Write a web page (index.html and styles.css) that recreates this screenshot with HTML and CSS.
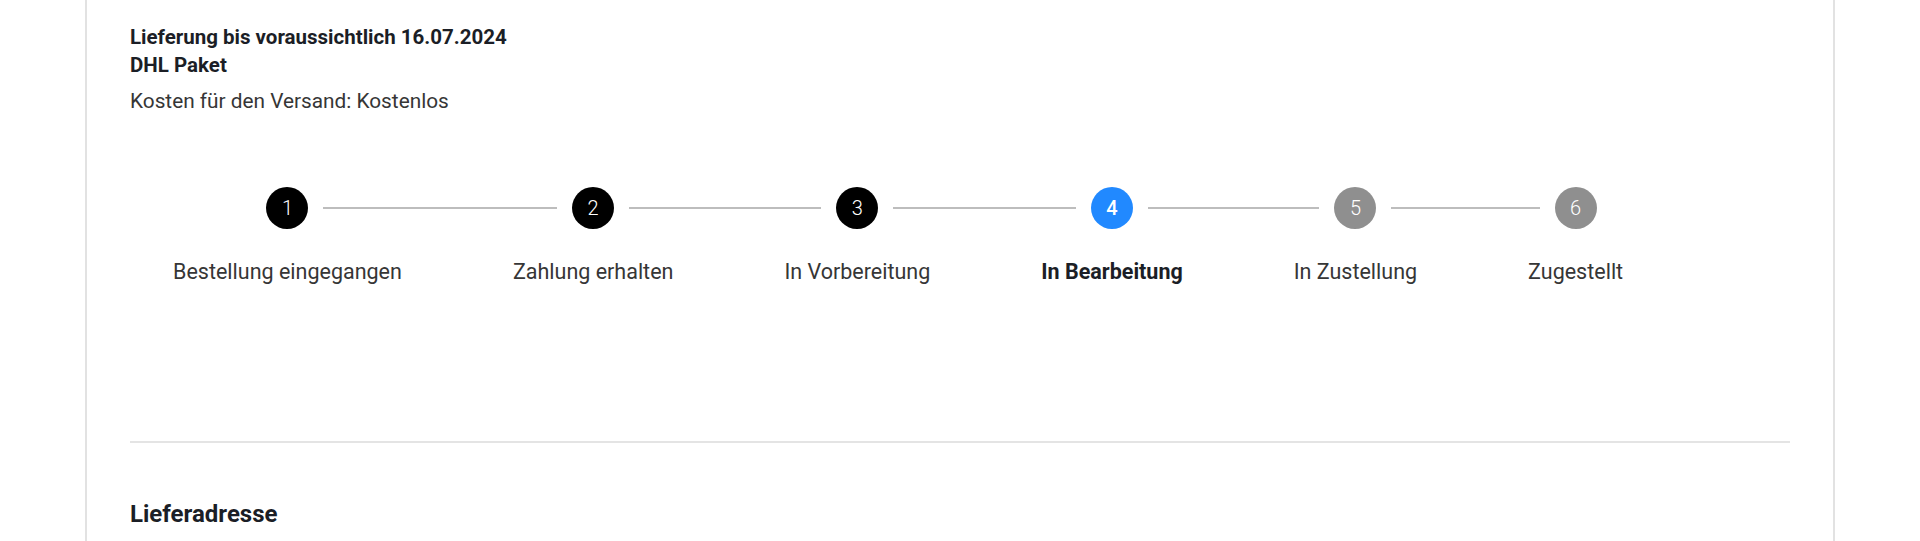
FILE: index.html
```html
<!DOCTYPE html>
<html lang="de">
<head>
<meta charset="utf-8">
<title>Bestellstatus</title>
<link rel="stylesheet" href="styles.css">
</head>
<body>
<div class="card">
  <section class="shipping">
    <p class="ship-strong">Lieferung bis voraussichtlich 16.07.2024</p>
    <p class="ship-strong">DHL Paket</p>
    <p class="ship-cost">Kosten für den Versand: Kostenlos</p>
  </section>

  <ol class="stepper">
    <li class="step done"><span class="dot">1</span><span class="label">Bestellung eingegangen</span></li>
    <li class="step done"><span class="dot">2</span><span class="label">Zahlung erhalten</span></li>
    <li class="step done"><span class="dot">3</span><span class="label">In Vorbereitung</span></li>
    <li class="step current"><span class="dot">4</span><span class="label">In Bearbeitung</span></li>
    <li class="step todo"><span class="dot">5</span><span class="label">In Zustellung</span></li>
    <li class="step todo"><span class="dot">6</span><span class="label">Zugestellt</span></li>
  </ol>

  <hr class="divider">

  <h2 class="section-title">Lieferadresse</h2>
</div>
</body>
</html>
```
FILE: styles.css
```css
* { box-sizing: border-box; }
html, body { margin: 0; padding: 0; background: #fff; }
body {
  font-family: Roboto, "Liberation Sans", sans-serif;
  color: #363636;
  overflow: hidden;
}
.card {
  width: 1750px;
  margin: 0 auto;
  min-height: 700px;
  border-left: 2px solid #e2e2e2;
  border-right: 2px solid #e2e2e2;
  padding: 23px 43px 0;
}
.shipping p { margin: 0; line-height: 28px; }
.ship-strong { font-size: 20.5px; font-weight: 700; color: #1b1e26; }
.ship-cost { margin-top: 8px !important; font-size: 20.8px; color: #363636; }

.stepper {
  list-style: none;
  margin: 72px 0 0 43px;
  padding: 0;
  display: flex;
  gap: 111px;
}
.step {
  position: relative;
  display: flex;
  flex-direction: column;
  align-items: center;
}
.step::before, .step::after {
  content: "";
  position: absolute;
  top: 20px;
  height: 2px;
  background: #bdbdbd;
}
.step::before { left: -56px; right: calc(50% + 36px); }
.step::after { left: calc(50% + 36px); right: -56px; }
.step:first-child::before, .step:last-child::after { display: none; }

.dot {
  width: 42px;
  height: 42px;
  border-radius: 50%;
  display: flex;
  align-items: center;
  justify-content: center;
  color: #fff;
  font-size: 20px;
  font-weight: 300;
  background: #000;
}
.current .dot { background: #2189ff; font-weight: 500; }
.todo .dot { background: #8f8f8f; }
.label {
  margin-top: 29px;
  font-size: 21.5px;
  line-height: 28px;
  white-space: nowrap;
  color: #363636;
}
.current .label { font-weight: 700; color: #1b1e26; }

.divider {
  border: 0;
  height: 2px;
  background: #e4e4e4;
  margin: 155px 0 0;
}
.section-title {
  margin: 55px 0 0;
  font-size: 24px;
  line-height: 32px;
  font-weight: 700;
  color: #1b1e26;
}
```
